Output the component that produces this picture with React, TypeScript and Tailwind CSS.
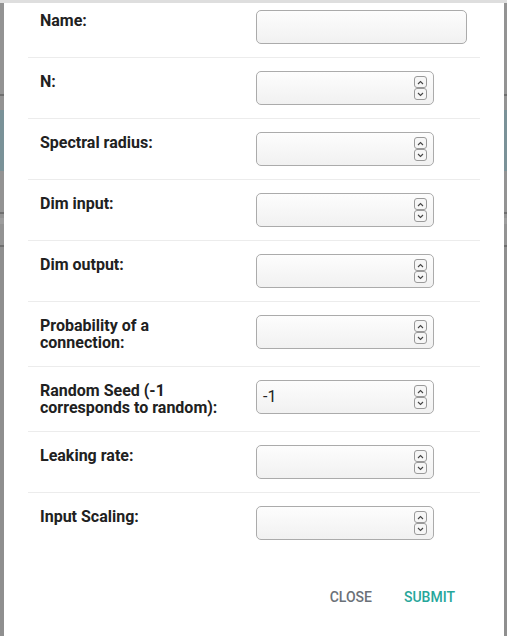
type Field = {
  label: string;
  kind: "text" | "number";
  value?: string;
};

const fields: Field[] = [
  { label: "Name:", kind: "text" },
  { label: "N:", kind: "number" },
  { label: "Spectral radius:", kind: "number" },
  { label: "Dim input:", kind: "number" },
  { label: "Dim output:", kind: "number" },
  { label: "Probability of a connection:", kind: "number" },
  { label: "Random Seed (-1 corresponds to random):", kind: "number", value: "-1" },
  { label: "Leaking rate:", kind: "number" },
  { label: "Input Scaling:", kind: "number" },
];

const Spinner = () => (
  <div className="flex flex-col">
    <div className="w-[13px] h-[12px] border border-[#9a9a9a] rounded-[3px] bg-[#f6f6f6] flex items-center justify-center">
      <svg width="7" height="5" viewBox="0 0 7 5">
        <path d="M1 4 L3.5 1.5 L6 4" fill="none" stroke="#444" strokeWidth="1.1" />
      </svg>
    </div>
    <div className="w-[13px] h-[12px] border border-[#9a9a9a] rounded-[3px] bg-[#f6f6f6] flex items-center justify-center">
      <svg width="7" height="5" viewBox="0 0 7 5">
        <path d="M1 1 L3.5 3.5 L6 1" fill="none" stroke="#444" strokeWidth="1.1" />
      </svg>
    </div>
  </div>
);

const Input = ({ kind, value }: { kind: Field["kind"]; value?: string }) => (
  <div
    className={`h-[34px] border border-[#ababab] rounded-[5px] bg-gradient-to-b from-[#fdfdfd] to-[#f1f1f1] flex items-center pl-[6px] pr-[6px] ${
      kind === "text" ? "w-[211px]" : "w-[178px]"
    }`}
  >
    <span className="flex-1 text-[16px] text-[#222] font-['Roboto',sans-serif]">{value}</span>
    {kind === "number" && <Spinner />}
  </div>
);

const Row = ({ field, first, last }: { field: Field; first: boolean; last: boolean }) => (
  <div
    className={`flex items-start pl-3 ${first ? "pt-[7px]" : "pt-[13px]"} pb-[13px] ${
      last ? "" : "border-b border-[#ececec]"
    }`}
  >
    <div className="w-[216px] pr-2 pt-[2px] pb-[2px]">
      <p className="w-[188px] text-[16px] leading-[17px] font-bold text-[#212121] font-['Roboto',sans-serif]">
        {field.label}
      </p>
    </div>
    <Input kind={field.kind} value={field.value} />
  </div>
);

export default function App() {
  return (
    <div className="w-[507px] h-[636px] overflow-hidden flex flex-col bg-[#8f8f8f]">
      <div className="h-[3px] bg-[#dedede] shrink-0" />
      <div className="relative flex-1">
        <div className="flex flex-col">
          <div className="h-[91px] bg-[#939393]" />
          <div className="h-[2px] bg-[#6f6f6f]" />
          <div className="h-[14px] bg-[#939393]" />
          <div className="h-[61px] bg-[#7a9298]" />
          <div className="h-[41px] bg-[#939393]" />
          <div className="h-[2px] bg-[#6f6f6f]" />
          <div className="h-[4px] bg-[#939393]" />
          <div className="h-[6px] bg-[#9d9d9d]" />
          <div className="h-[21px] bg-[#939393]" />
          <div className="h-[2px] bg-[#6f6f6f]" />
        </div>
        <div className="absolute left-[4px] right-[3px] top-0 bottom-0 bg-white flex flex-col">
          <div className="px-6">
            {fields.map((f, i) => (
              <Row key={f.label} field={f} first={i === 0} last={i === fields.length - 1} />
            ))}
          </div>
          <div className="flex justify-end pr-[33px] pt-[26px]">
            <button className="px-4 h-9 text-[14px] font-medium text-[#6b7178] font-['Roboto',sans-serif]">
              CLOSE
            </button>
            <button className="px-4 h-9 text-[14px] font-medium text-[#26a69a] font-['Roboto',sans-serif]">
              SUBMIT
            </button>
          </div>
        </div>
      </div>
    </div>
  );
}
